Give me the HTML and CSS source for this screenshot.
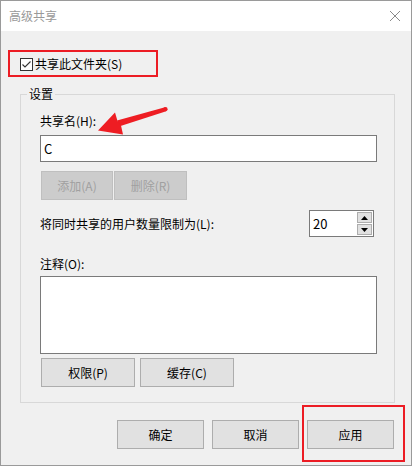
FILE: index.html
```html
<!DOCTYPE html>
<html lang="zh-CN">
<head>
<meta charset="utf-8">
<title>高级共享</title>
<link rel="stylesheet" href="styles.css">
</head>
<body>
<div class="window">
  <div class="titlebar">
    <span class="title">高级共享</span>
    <svg class="close" width="12" height="12" viewBox="0 0 12 12"><path d="M1 1 L11 11 M11 1 L1 11" stroke="#8a8a8a" stroke-width="1" fill="none"/></svg>
  </div>
  <div class="content">
    <label class="check-row">
      <svg class="checkbox" width="13" height="13" viewBox="0 0 13 13"><rect x="0.5" y="0.5" width="12" height="12" fill="#fff" stroke="#333"/><path d="M2.5 6.5 L5 9 L10.5 3.5" stroke="#333" stroke-width="1.1" fill="none"/></svg>
      <span>共享此文件夹(S)</span>
    </label>
    <div class="group">
      <span class="legend">设置</span>
      <div class="label label-name">共享名(H):</div>
      <div class="textbox">C</div>
      <div class="btn-row small">
        <div class="btn disabled w72">添加(A)</div>
        <div class="btn disabled w73">删除(R)</div>
      </div>
      <div class="limit-row">
        <span class="label">将同时共享的用户数量限制为(L):</span>
        <div class="spin">
          <span class="spin-val">20</span>
          <div class="spin-btns">
            <div class="spin-btn"><svg width="7" height="4" viewBox="0 0 7 4"><path d="M3.5 0 L7 4 L0 4 Z" fill="#000"/></svg></div>
            <div class="spin-btn"><svg width="7" height="4" viewBox="0 0 7 4"><path d="M0 0 L7 0 L3.5 4 Z" fill="#000"/></svg></div>
          </div>
        </div>
      </div>
      <div class="label label-note">注释(O):</div>
      <div class="textarea"></div>
      <div class="btn-row perm">
        <div class="btn w94">权限(P)</div>
        <div class="btn w94">缓存(C)</div>
      </div>
    </div>
    <div class="footer">
      <div class="btn w87">确定</div>
      <div class="btn w87">取消</div>
      <div class="btn w87">应用</div>
    </div>
  </div>
  <div class="mark mark-check"></div>
  <div class="mark mark-apply"></div>
  <svg class="arrow" width="75" height="34" viewBox="0 0 75 34">
    <path d="M70 3.2 L71.2 7.2 L24 22.5 L22 16.5 Z" fill="#ee1d23"/>
    <circle cx="70.5" cy="5.2" r="2.1" fill="#ee1d23"/>
    <path d="M3 26.5 L20 8.5 L22.5 17 L26 21.5 L28 30.5 Z" fill="#ee1d23"/>
  </svg>
</div>
</body>
</html>
```

FILE: styles.css
```css
* { box-sizing: border-box; }
html, body { margin: 0; padding: 0; background: #f0f0f0; }
body {
  font-family: "Noto Sans CJK SC", "Noto Sans", sans-serif;
  font-size: 12px;
  line-height: 16px;
  color: #000;
}
.window {
  position: relative;
  width: 412px;
  height: 466px;
  border: 1px solid #9a9a9a;
  display: flex;
  flex-direction: column;
  overflow: hidden;
}
.titlebar {
  height: 30px;
  background: #fff;
  display: flex;
  align-items: center;
  justify-content: space-between;
  padding: 0 10px 0 8px;
  flex: none;
}
.title { color: #999; font-size: 12px; }
.close { display: block; margin-top: 0; }
.content {
  flex: 1;
  background: #f0f0f0;
  display: flex;
  flex-direction: column;
}
.check-row {
  display: flex;
  align-items: center;
  gap: 2px;
  margin: 25px 0 0 19px;
  height: 16px;
}
.checkbox { display: block; flex: none; }
.group {
  position: relative;
  margin: 22px 0 0 19px;
  width: 375px;
  height: 309px;
  border: 1px solid #d8d8d8;
  padding: 0 17px 0 19px;
  display: flex;
  flex-direction: column;
}
.legend {
  position: absolute;
  top: -9px;
  left: 6px;
  padding: 0 2px;
  background: #f0f0f0;
  line-height: 16px;
}
.label-name { margin-top: 18px; }
.textbox {
  margin-top: 6px;
  height: 27px;
  background: #fff;
  border: 1px solid #7a7a7a;
  padding: 0 3px;
  display: flex;
  align-items: center;
  font-size: 13px;
}
.btn-row { display: flex; }
.btn-row.small { margin-top: 9px; gap: 1px; padding-left: 1px; }
.btn {
  height: 29px;
  background: #e1e1e1;
  border: 1px solid #adadad;
  display: flex;
  align-items: center;
  justify-content: center;
}
.btn.disabled {
  background: #cccccc;
  border-color: #bfbfbf;
  color: #a0a0a0;
}
.w72 { width: 72px; }
.w73 { width: 73px; }
.w87 { width: 87px; }
.w94 { width: 94px; }
.limit-row {
  margin-top: 10px;
  display: flex;
  align-items: center;
  justify-content: space-between;
  height: 27px;
}
.spin {
  width: 65px;
  height: 27px;
  margin-right: 3px;
  background: #fff;
  border: 1px solid #7a7a7a;
  display: flex;
  align-items: center;
  justify-content: space-between;
  padding: 1px 1px 1px 3px;
}
.spin-val { font-size: 13px; }
.spin-btns {
  display: flex;
  flex-direction: column;
  gap: 1px;
  height: 23px;
}
.spin-btn {
  width: 15px;
  flex: 1;
  background: #e1e1e1;
  border: 1px solid #adadad;
  display: flex;
  align-items: center;
  justify-content: center;
}
.spin-btn svg { display: block; }
.label-note { margin-top: 19px; }
.textarea {
  margin-top: 4px;
  height: 78px;
  background: #fff;
  border: 1px solid #7a7a7a;
}
.btn-row.perm { margin-top: 4px; gap: 5px; padding-left: 1px; }
.footer {
  display: flex;
  justify-content: flex-end;
  gap: 8px;
  margin: 17px 17px 0 0;
}
.mark {
  position: absolute;
  border: 2px solid #ec1c24;
}
.mark-check { left: 7px; top: 49px; width: 150px; height: 27px; }
.mark-apply { left: 301px; top: 404px; width: 103px; height: 57px; }
.arrow { position: absolute; left: 94px; top: 103px; }
```
